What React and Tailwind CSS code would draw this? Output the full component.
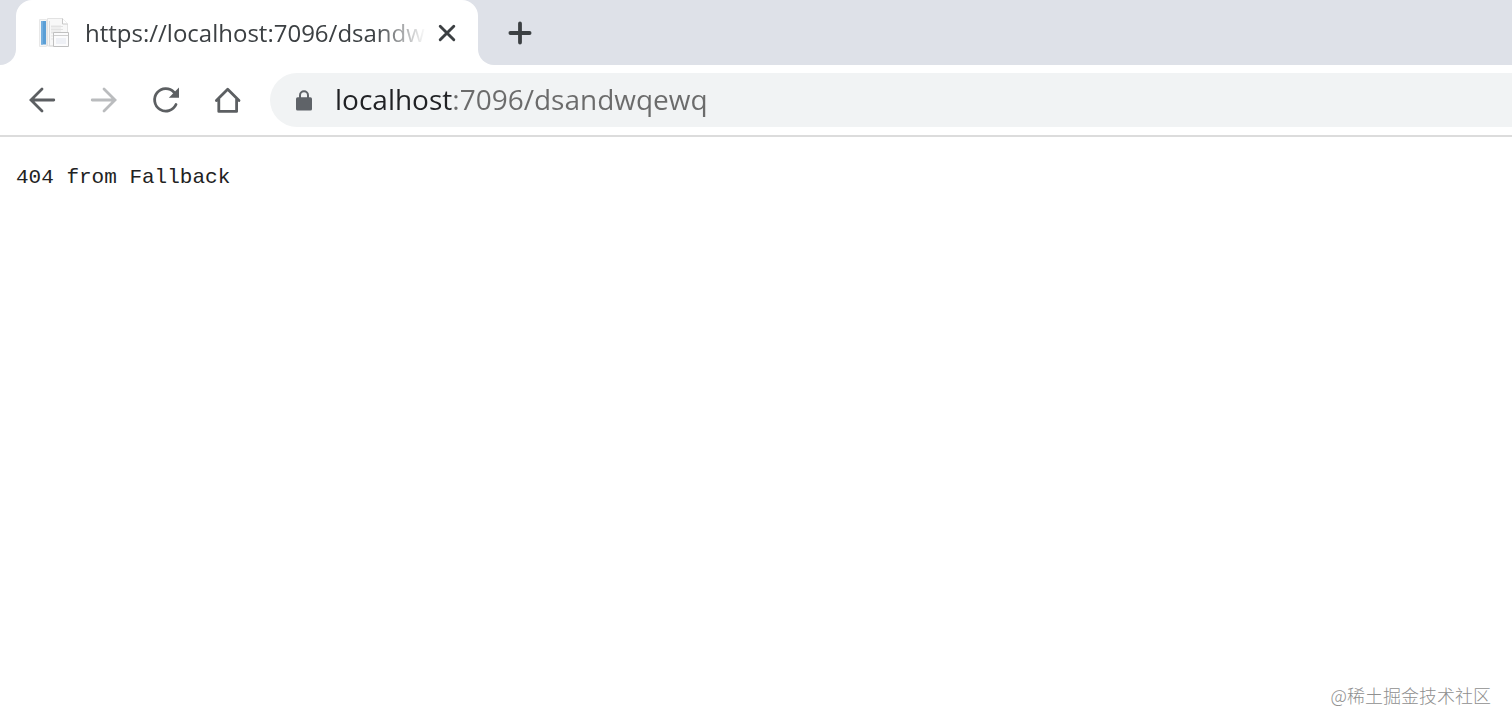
import {useState} from "react";

const FileIcon = () => (
    <svg className="w-8 h-8 shrink-0" viewBox="0 0 32 32" fill="none" aria-hidden="true">
        <path d="M1.5 2.5h7v27h-7z" fill="#f7f7f7" stroke="#e8e8e8"/>
        <path d="M3 4h5v23.5H3z" fill="#5b9fd6"/>
        <path d="M3 4h2v23.5H3z" fill="#74afdf"/>
        <path d="M9.5 1.5h15l5 5.5v22h-20z" fill="#f8f8f8" stroke="#e2e2e2"/>
        <path d="M24.5 1.5V7h5" fill="#fff" stroke="#c8c8c8"/>
        <path d="M13 8h10v9H13z" fill="#eeeeee"/>
        <path d="M13 9.5h12M13 12.5h12M13 15.5h3M13 19h2M13 22h2" stroke="#e3e3e3"/>
        <path d="M11.5 4v25h4" stroke="#dedede"/>
        <path d="M15.5 15.5h15v14h-15z" fill="#fbfbfc" stroke="#c0c0c0"/>
        <path d="M16 18.5h14" stroke="#cfcfcf"/>
        <path d="M18 21h10v6H18z" fill="#eef0f5"/>
    </svg>
);

const CloseIcon = () => (
    <svg className="w-5 h-5" viewBox="0 0 20 20" stroke="#3c4043" strokeWidth="2.9" strokeLinecap="round" aria-hidden="true">
        <path d="M3.2 3.2l13.6 13.6M16.8 3.2L3.2 16.8"/>
    </svg>
);

const PlusIcon = () => (
    <svg className="w-6 h-6" viewBox="0 0 24 24" stroke="#3c4043" strokeWidth="3.8" strokeLinecap="round" aria-hidden="true">
        <path d="M12 2.4v19.2M2.4 12h19.2"/>
    </svg>
);

const ArrowIcon = ({className}) => (
    <svg className={className} viewBox="0 0 28 28" fill="none" stroke="currentColor" strokeWidth="2.8" strokeLinecap="round" aria-hidden="true">
        <path d="M25.8 14H3.5M14 3L3 14l11 11"/>
    </svg>
);

const ReloadIcon = () => (
    <svg className="w-7 h-7" viewBox="0 0 28 28" fill="none" aria-hidden="true">
        <path d="M24 18.5A11.2 11.2 0 1 1 22 6.2" stroke="#5c5f62" strokeWidth="2.8" strokeLinecap="round"/>
        <path d="M27 1.6v10.2H16.8z" fill="#5c5f62"/>
    </svg>
);

const HomeIcon = () => (
    <svg className="w-7 h-7" viewBox="0 0 28 28" fill="none" stroke="#5c5f62" strokeWidth="2.8" strokeLinecap="round" strokeLinejoin="round" aria-hidden="true">
        <path d="M2.4 14.4L13.7 3.2l11.3 11.2M4.8 13v12.4h17.8V13"/>
    </svg>
);

const LockIcon = () => (
    <svg className="w-4 h-[22px]" viewBox="0 0 16 22" fill="none" aria-hidden="true">
        <path d="M4 9.5V6.3a4 4 0 0 1 8 0v3.2" stroke="#5f6368" strokeWidth="2"/>
        <rect x="0" y="8.2" width="16" height="13.3" rx="1.6" fill="#5f6368"/>
    </svg>
);

const App = () => {
    const [url, setUrl] = useState("localhost:7096/dsandwqewq");

    return (
        <div className="flex flex-col min-h-screen bg-white font-['Open_Sans',sans-serif]">
            {/* tab strip */}
            <div className="flex h-[65px]">
                <div className="w-4 bg-[#dee1e8] rounded-br-2xl"/>
                <div className="bg-[#dee1e8]">
                    <div className="flex items-center h-full w-[462px] pl-[22px] pr-[21px] bg-white rounded-t-2xl">
                        <FileIcon/>
                        <span className="flex-1 ml-[15px] mr-[11px] whitespace-nowrap text-2xl text-[#3c4043] mask-r-from-85% mask-r-to-100%">
                            https://localhost:7096/dsandw
                        </span>
                        <button type="button" aria-label="Close tab">
                            <CloseIcon/>
                        </button>
                    </div>
                </div>
                <div className="flex flex-1 items-center pl-[30px] bg-[#dee1e8] rounded-bl-2xl">
                    <button type="button" aria-label="New tab">
                        <PlusIcon/>
                    </button>
                </div>
            </div>

            {/* toolbar */}
            <div className="flex items-center h-[72px] pl-7 border-b-2 border-[#dcdcdc]">
                <div className="flex items-center gap-[34px] mr-7">
                    <button type="button" aria-label="Back" className="text-[#5c5f62]">
                        <ArrowIcon className="w-7 h-7"/>
                    </button>
                    <button type="button" aria-label="Forward" className="text-[#babcbe]">
                        <ArrowIcon className="w-7 h-7 rotate-180"/>
                    </button>
                    <button type="button" aria-label="Reload">
                        <ReloadIcon/>
                    </button>
                    <button type="button" aria-label="Home">
                        <HomeIcon/>
                    </button>
                </div>
                <div className="flex flex-1 items-center h-[54px] pl-[26px] bg-[#f1f3f4] rounded-l-full">
                    <LockIcon/>
                    {/* host dark, port and path grey */}
                    <input
                        type="text"
                        aria-label="Address"
                        spellCheck={false}
                        className="flex-1 ml-[23px] h-10 pb-0.5 text-[28px] outline-none text-[#202124] bg-[linear-gradient(to_right,#202124_117px,#6b6b6b_117px)] bg-clip-text [-webkit-text-fill-color:transparent]"
                        value={url}
                        onChange={(e) => setUrl(e.target.value)}
                    />
                </div>
            </div>

            {/* page */}
            <main className="flex flex-1 flex-col justify-between">
                <pre className="px-4 pt-[25px] text-[21px] leading-8 text-[#222] font-['Liberation_Mono',monospace]">404 from Fallback</pre>
                <p className="self-end pr-[21px] pb-[17px] text-lg leading-8 font-light text-[#8f8f8f] font-['Noto_Sans_CJK_SC',sans-serif]">@稀土掘金技术社区</p>
            </main>
        </div>
    );
};

export default App;
